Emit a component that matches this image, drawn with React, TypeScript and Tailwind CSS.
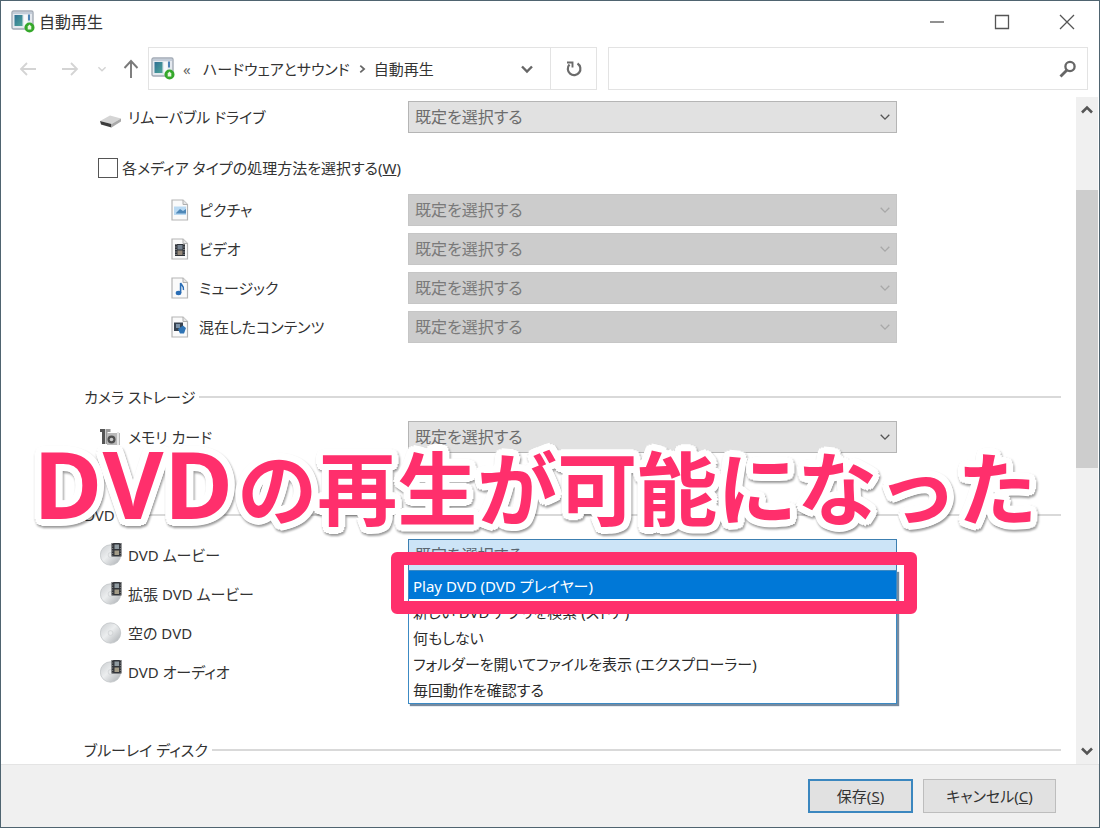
import React from "react";

const PLACEHOLDER = "既定を選択する";

function AutoPlayIcon() {
  return (
    <svg width="24" height="24" viewBox="0 0 24 24" aria-hidden="true" className="shrink-0">
      <rect x="1" y="1" width="21" height="18" rx="1.5" fill="#e4e9ef" stroke="#a3abb6" strokeWidth="1.4" />
      <path d="M2 2h19v2H2z" fill="#c3ccd8" />
      <defs>
        <linearGradient id="screen" x1="0" y1="0" x2="1" y2="1">
          <stop offset="0" stopColor="#2f6f94" />
          <stop offset="1" stopColor="#4ea79a" />
        </linearGradient>
      </defs>
      <rect x="3.5" y="5" width="8" height="11" fill="url(#screen)" />
      <rect x="13" y="5" width="3.5" height="11" fill="#f7f9fb" />
      <rect x="17" y="4.500" width="2" height="6" fill="#4d83b5" />
      <circle cx="18.500" cy="17.500" r="5" fill="#35a82b" />
      <path d="M18.500 14.500l1.800 2v3h-3.600v-3z" fill="#e9f8df" />
    </svg>
  );
}

function Chevron({ className, size = 14, dir = "down", weight = 2 }: { className?: string; size?: number; dir?: "down" | "up" | "right"; weight?: number }) {
  const d = { down: "M2 4.500l5 5 5-5", up: "M2 9.500l5-5 5 5", right: "M5 3l4.500 4L5 11" }[dir];
  return (
    <svg width={size} height={size} viewBox="0 0 14 14" fill="none" stroke="currentColor" strokeWidth={weight} aria-hidden="true" className={className}>
      <path d={d} />
    </svg>
  );
}

function DriveIcon() {
  return (
    <svg width="22" height="22" viewBox="0 0 22 22" aria-hidden="true">
      <path d="M0 15L10 9.500l11 3-9.500 5.500z" fill="#d5d5d5" />
      <path d="M0 15l11.500 3v3.500L1 18.500z" fill="#3c3c3c" />
      <path d="M11.500 18L21 12.500v3l-9.500 6z" fill="#a9a9a9" />
    </svg>
  );
}

function PageIcon({ children }: { children: React.ReactNode }) {
  return (
    <svg width="18" height="22" viewBox="0 0 18 22" aria-hidden="true">
      <path d="M1 1h11l4.500 4.500V21H1z" fill="#fafafa" stroke="#b5b5b5" strokeWidth="1.2" />
      <path d="M12 1v4.500h4.500" fill="#e6e6e6" stroke="#b0b0b0" />
      {children}
    </svg>
  );
}

const pictureIcon = (
  <PageIcon>
    <rect x="3" y="7.500" width="12" height="8.500" fill="#b9d9f2" />
    <path d="M5 14l4-4 3 2 3-2v4.500H5z" fill="#4f88b8" />
  </PageIcon>
);
const videoIcon = (
  <PageIcon>
    <rect x="4" y="6" width="10" height="12" fill="#2e3238" />
    <rect x="6.500" y="7" width="5" height="4.500" fill="#76828f" />
    <rect x="6.500" y="12.500" width="5" height="4.500" fill="#96897a" />
    <path d="M5 6v12M13 6v12" stroke="#b5b5b5" strokeDasharray="1 1.500" />
  </PageIcon>
);
const musicIcon = (
  <PageIcon>
    <ellipse cx="7.500" cy="16" rx="2.800" ry="2.200" fill="#2a6db5" />
    <path d="M9.600 16V6c.6 2.500 4 3 2.800 7" fill="none" stroke="#2a6db5" strokeWidth="1.600" />
  </PageIcon>
);
const mixedIcon = (
  <PageIcon>
    <rect x="3" y="6.500" width="9" height="8.500" fill="#384350" />
    <rect x="5" y="8" width="4" height="4" fill="#7d93a8" />
    <path d="M7 13l5-3.500 3 2.500-2 5.500H9z" fill="#2f74b5" />
  </PageIcon>
);

function CameraIcon() {
  return (
    <svg width="22" height="20" viewBox="0 0 22 20" aria-hidden="true">
      <path d="M0 2h5v15H2V5H0z" fill="#555" />
      <path d="M5.500 2h5v3h-3v12h-2z" fill="#9b9b9b" />
      <rect x="7" y="6" width="13" height="12" fill="#b9b9b9" />
      <circle cx="11.500" cy="12.500" r="4" fill="#4f4f4f" />
      <circle cx="11.500" cy="12.500" r="1.800" fill="#c9c9c9" />
      <rect x="17" y="5" width="2" height="13" fill="#e6e6e6" />
    </svg>
  );
}

function DiscIcon({ film }: { film?: boolean }) {
  const id = film ? "disc-film" : "disc-blank";
  return (
    <svg width="24" height="24" viewBox="0 0 24 24" aria-hidden="true">
      <defs>
        <linearGradient id={id} x1="0" y1="0" x2="1" y2="1">
          <stop offset="0" stopColor="#c9cccf" />
          <stop offset=".45" stopColor="#eceeef" />
          <stop offset="1" stopColor="#a9adb1" />
        </linearGradient>
      </defs>
      <circle cx="10.500" cy="12" r="10.200" fill={`url(#${id})`} stroke="#c2c5c8" strokeWidth=".8" />
      <circle cx="10.500" cy="12" r="2.400" fill="#e9ebec" stroke="#c6c9cb" strokeWidth=".6" />
      {film && (
        <g>
          <rect x="11.500" y="0" width="10" height="13.500" fill="#33363b" />
          <rect x="14.500" y="1.500" width="4.500" height="4.500" fill="#8f9aa0" />
          <rect x="14.500" y="7.500" width="4.500" height="4.500" fill="#a39c88" />
          <path d="M12.700 0v13.500M20.300 0v13.500" stroke="#8a8a8a" strokeDasharray="1 1.500" />
        </g>
      )}
    </svg>
  );
}

function DefaultSelect({ id, disabled, open }: { id: string; disabled?: boolean; open?: boolean }) {
  return (
    <div className="relative h-8 w-full max-w-[489px]">
      <select
        id={id}
        disabled={disabled}
        className={
          "h-full w-full appearance-none border pl-1.5 pr-8 text-base opacity-100 outline-none " +
          (open
            ? "border-[#3c7fb1] bg-[#cce4f7] text-[#5b6670]"
            : disabled
              ? "border-[#c6c6c6] bg-[#cccccc] text-[#7a7a7a]"
              : "border-[#b5b5b5] bg-[#e1e1e1] text-[#6d6d6d]")
        }
      >
        <option>{PLACEHOLDER}</option>
      </select>
      <Chevron
        size={12}
        weight={1.6}
        className={"pointer-events-none absolute right-1.5 top-2.5 " + (disabled ? "text-[#a8a8a8]" : "text-[#555555]")}
      />
    </div>
  );
}

function Row({ id, icon, label, indent, children }: { id?: string; icon: React.ReactNode; label: string; indent?: boolean; children?: React.ReactNode }) {
  return (
    <div className="grid h-8 grid-cols-[324px_minmax(0,1fr)] items-center">
      <label htmlFor={id} className={"flex items-center " + (indent ? "pl-[87px]" : "pl-4")}>
        <span className="flex w-7 shrink-0 items-center">{icon}</span>
        {label}
      </label>
      {children}
    </div>
  );
}

function SectionHeader({ children }: { children: React.ReactNode }) {
  return (
    <div className="mb-3 flex h-6 items-center gap-1">
      <h2>{children}</h2>
      <span className="h-0.5 flex-1 bg-[#d9d9d9]" />
    </div>
  );
}

function ActionList() {
  const options = ["新しい DVD アプリを検索 (ストア)", "何もしない", "フォルダーを開いてファイルを表示 (エクスプローラー)", "毎回動作を確認する"];
  return (
    <>
      <div
        role="listbox"
        aria-label="DVD ムービー"
        className="absolute left-0 top-[31px] w-full border border-[#3c8ac4] bg-white text-[#2b2b2b] shadow-[2px_2px_1px_rgba(60,90,120,0.7)]"
      >
        <button role="option" aria-selected="true" className="flex h-7 w-full items-center bg-[#0078d7] px-1 pt-0.5 text-left text-white">
          Play DVD (DVD プレイヤー)
        </button>
        {options.map((o) => (
          <button key={o} role="option" aria-selected="false" className="flex h-[26px] w-full items-center px-1 text-left">
            {o}
          </button>
        ))}
      </div>
      <div className="pointer-events-none absolute -left-[17px] -right-5 top-[13px] h-[62px] rounded-md border-[13px] border-[#ff2f6c]" />
    </>
  );
}

export default function App() {
  return (
    <div className="relative flex h-screen min-h-[600px] flex-col overflow-hidden border border-[#4f6470] bg-white font-['Noto_Sans','Noto_Sans_CJK_JP',sans-serif] text-[15px] leading-6 text-[#333333] [font-feature-settings:'palt']">
      <header className="mb-1 flex h-[42px] shrink-0 items-center">
        <div className="flex flex-1 items-center gap-1 pl-2.5">
          <AutoPlayIcon />
          <h1 className="text-base">自動再生</h1>
        </div>
        <button aria-label="最小化" className="flex h-full w-[65px] items-center justify-center">
          <svg width="16" height="16" viewBox="0 0 16 16" stroke="#555" strokeWidth="1.3"><path d="M1 8h14" /></svg>
        </button>
        <button aria-label="最大化" className="flex h-full w-[65px] items-center justify-center">
          <svg width="16" height="16" viewBox="0 0 16 16" fill="none" stroke="#555" strokeWidth="1.3"><path d="M1.500 1.500h13v13h-13z" /></svg>
        </button>
        <button aria-label="閉じる" className="flex h-full w-[65px] items-center justify-center">
          <svg width="16" height="16" viewBox="0 0 16 16" fill="none" stroke="#555" strokeWidth="1.3"><path d="M1 1l14 14M15 1L1 15" /></svg>
        </button>
      </header>

      <nav className="mb-[7px] flex h-[43px] shrink-0 pr-[11px]">
        <div className="flex w-[147px] shrink-0 items-center pl-[18px] text-[#d4d4d4]">
          <button aria-label="戻る" className="mr-6">
            <svg width="18" height="16" viewBox="0 0 18 16" fill="none" stroke="currentColor" strokeWidth="1.8"><path d="M17 8H2M8 2L2 8l6 6" /></svg>
          </button>
          <button aria-label="進む" className="mr-[18px]">
            <svg width="18" height="16" viewBox="0 0 18 16" fill="none" stroke="currentColor" strokeWidth="1.8"><path d="M1 8h15M10 2l6 6-6 6" /></svg>
          </button>
          <button aria-label="最近表示した場所" className="mr-4">
            <Chevron size={10} />
          </button>
          <button aria-label="上へ" className="text-[#7a7a7a]">
            <svg width="16" height="20" viewBox="0 0 16 20" fill="none" stroke="currentColor" strokeWidth="1.9"><path d="M8 19V2M1.500 9L8 2l6.500 7" /></svg>
          </button>
        </div>
        <div className="mr-[11px] flex min-w-0 flex-[447] border border-[#e3e3e3]">
          <div className="flex min-w-0 flex-1 items-center whitespace-nowrap pl-0.5">
            <AutoPlayIcon />
            <span className="w-7 pl-2 text-[#666666]">«</span>
            <a href="#hardware-and-sound">ハードウェアとサウンド</a>
            <Chevron dir="right" size={12} className="mx-1.5 text-[#666666]" />
            <a href="#autoplay" className="flex-1">自動再生</a>
            <button aria-label="以前の場所" className="px-4 text-[#666666]">
              <Chevron size={14} weight={2.4} />
            </button>
          </div>
          <button aria-label="更新" className="flex w-[46px] shrink-0 items-center justify-center border-l border-[#e3e3e3]">
            <svg width="18" height="18" viewBox="0 0 18 18" fill="none" stroke="#6b6b6b" strokeWidth="2.200">
              <path d="M12.500 3.500A6.300 6.300 0 1 1 4.500 4.500" />
              <path d="M2 2.500h5.500v5" strokeWidth="1.900" />
            </svg>
          </button>
        </div>
        <div className="flex min-w-0 flex-[468] items-center border border-[#e3e3e3] pr-2.5">
          <input type="search" aria-label="検索" className="h-full min-w-0 flex-1 px-2 outline-none" />
          <svg width="18" height="18" viewBox="0 0 18 18" fill="none" stroke="#666" aria-hidden="true">
            <circle cx="11" cy="6.500" r="4.600" strokeWidth="2.300" />
            <path d="M8 10l-6.500 6.500" strokeWidth="2.800" />
          </svg>
        </div>
      </nav>

      <div className="flex min-h-0 flex-1 pr-px">
        <main className="min-w-0 flex-1 overflow-hidden pl-[83px] pr-[15px] pt-1">
          <Row id="removable" icon={<DriveIcon />} label="リムーバブル ドライブ">
            <DefaultSelect id="removable" />
          </Row>
          <div className="mb-3.5 mt-[23px] flex h-6 items-center gap-1 pl-3.5">
            <input id="each-media" type="checkbox" className="size-5 appearance-none border border-[#555555] bg-white" />
            <label htmlFor="each-media">
              各メディア タイプの処理方法を選択する(<u>W</u>)
            </label>
          </div>
          <div className="mb-[42px] flex flex-col gap-[7px]">
            <Row indent id="pictures" icon={pictureIcon} label="ピクチャ"><DefaultSelect id="pictures" disabled /></Row>
            <Row indent id="videos" icon={videoIcon} label="ビデオ"><DefaultSelect id="videos" disabled /></Row>
            <Row indent id="music" icon={musicIcon} label="ミュージック"><DefaultSelect id="music" disabled /></Row>
            <Row indent id="mixed" icon={mixedIcon} label="混在したコンテンツ"><DefaultSelect id="mixed" disabled /></Row>
          </div>

          <SectionHeader>カメラ ストレージ</SectionHeader>
          <div className="mb-[50px]">
            <Row id="memory" icon={<CameraIcon />} label="メモリ カード"><DefaultSelect id="memory" /></Row>
          </div>

          <SectionHeader>DVD</SectionHeader>
          <div className="mb-[50px] flex flex-col gap-[7px]">
            <Row id="dvd-movie" icon={<DiscIcon film />} label="DVD ムービー">
              <div className="relative max-w-[489px]">
                <DefaultSelect id="dvd-movie" open />
                <ActionList />
              </div>
            </Row>
            <Row icon={<DiscIcon film />} label="拡張 DVD ムービー" />
            <Row icon={<DiscIcon />} label="空の DVD" />
            <Row icon={<DiscIcon film />} label="DVD オーディオ" />
          </div>

          <SectionHeader>ブルーレイ ディスク</SectionHeader>
        </main>

        <div className="flex w-[22px] shrink-0 flex-col bg-[#f0f0f0] text-[#555555]">
          <button aria-label="上にスクロール" className="flex h-[26px] items-center justify-center"><Chevron dir="up" size={14} weight={2.6} /></button>
          <span className="flex-[67]" />
          <span className="flex-[277] bg-[#cdcdcd]" />
          <span className="flex-[270]" />
          <button aria-label="下にスクロール" className="flex h-[26px] items-center justify-center"><Chevron size={14} weight={2.6} /></button>
        </div>
      </div>

      <footer className="flex h-[63px] shrink-0 items-center justify-end gap-2.5 border-t border-[#e4e4e4] bg-[#f0f0f0] pr-[43px]">
        <button className="h-[34px] w-[105px] border-2 border-[#3b87bf] bg-[#e1e1e1]">保存(<u>S</u>)</button>
        <button className="h-[34px] w-[133px] border border-[#bdbdbd] bg-[#e1e1e1]">キャンセル(<u>C</u>)</button>
      </footer>

      <p className="pointer-events-none absolute left-8 top-[422px] flex items-baseline whitespace-nowrap font-bold leading-[120px] text-[#ff2f6c] [font-feature-settings:normal] [text-shadow:7px_0_white,6px_3px_white,5px_5px_white,3px_6px_white,0_7px_white,-3px_6px_white,-5px_5px_white,-6px_3px_white,-7px_0_white,-6px_-3px_white,-5px_-5px_white,-3px_-6px_white,0_-7px_white,3px_-6px_white,5px_-5px_white,6px_-3px_white,3px_3px_white,-3px_3px_white,-3px_-3px_white,3px_-3px_white] drop-shadow-[1px_2px_1px_rgba(0,0,0,0.4)]">
        <span className="relative z-10 font-['Open_Sans',sans-serif] text-[94px]">DVD</span>
        <span className="pl-1 font-['Noto_Sans_CJK_JP',sans-serif] text-[80px]">の再生が可能になった</span>
      </p>
    </div>
  );
}
